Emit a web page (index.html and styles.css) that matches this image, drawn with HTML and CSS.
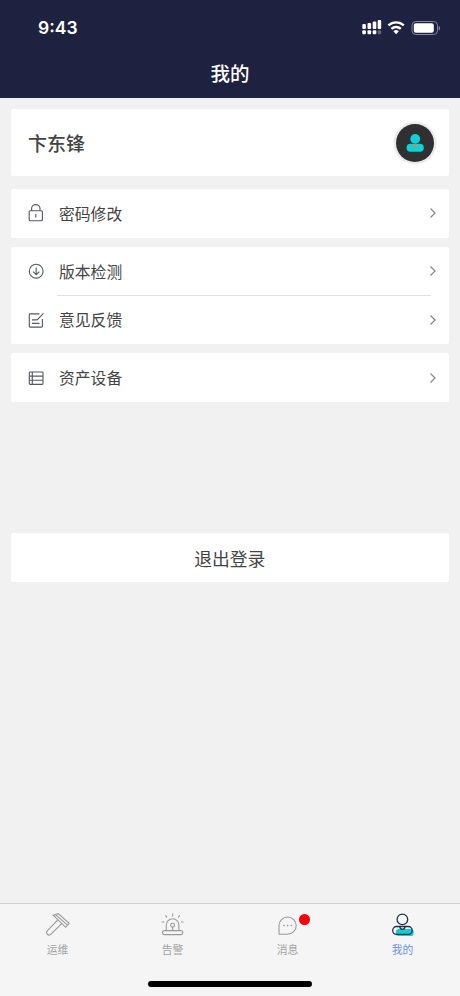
FILE: index.html
```
<!DOCTYPE html>
<html lang="zh-CN">
<head>
  <meta charset="UTF-8">
  <meta name="viewport" content="width=device-width, initial-scale=1.0">
  <title>我的</title>
  <link rel="stylesheet" href="styles.css">
</head>
<body>

  <header class="header">
    <div class="status-bar">
      <span class="time">9:43</span>
      <svg class="status-icons" width="80" height="18" viewBox="0 0 80 18">
        <g fill="#fff">
          <rect x="2.3" y="6" width="3.6" height="5" rx="1"/>
          <rect x="7.5" y="5" width="3.6" height="6" rx="1"/>
          <rect x="12.7" y="3.5" width="3.6" height="7.5" rx="1"/>
          <rect x="17.7" y="2" width="3.5" height="9" rx="1"/>
          <rect x="2.3" y="12.3" width="3.6" height="4" rx="1"/>
          <rect x="7.5" y="12.3" width="3.6" height="4" rx="1"/>
          <rect x="12.7" y="12.3" width="3.6" height="4" rx="1"/>
          <rect x="17.7" y="12.3" width="3.5" height="4" rx="1" opacity=".3"/>
        </g>
        <g fill="none" stroke="#fff" stroke-width="2.4">
          <path d="M28.4 7.4a11.2 11.2 0 0 1 15.4 0"/>
          <path d="M31.4 10.9a6.8 6.8 0 0 1 9.4 0"/>
        </g>
        <path d="M33.4 13.3a4 4 0 0 1 5.4 0l-2.7 2.9z" fill="#fff"/>
        <rect x="52" y="3.5" width="25.5" height="13" rx="3.8" fill="none" stroke="#85869c"/>
        <rect x="53.8" y="5.3" width="20" height="9.4" rx="2" fill="#fff"/>
        <path d="M78.7 8v4.4c2.2-.8 2.2-3.6 0-4.4z" fill="#85869c"/>
      </svg>
    </div>
    <h1 class="title">我的</h1>
  </header>

  <main class="content">
    <section class="card profile">
      <span class="name">卞东锋</span>
      <svg class="avatar" width="44" height="44" viewBox="0 0 44 44">
        <circle cx="22" cy="22" r="21.5" fill="#ececec"/>
        <circle cx="22" cy="22" r="19" fill="#303032"/>
        <circle cx="22.2" cy="17.9" r="4.9" fill="#0bd3da"/>
        <rect x="13.5" y="22.7" width="17.3" height="8" rx="4" fill="#0bd3da"/>
        <path d="M18.6 23.1h6.8l-3.4 4.5z" fill="#a99a62"/>
      </svg>
    </section>

    <section class="card">
      <a class="row">
        <svg class="row-icon" viewBox="0 0 16 18">
          <rect x="1.2" y="6.8" width="13.2" height="10" rx="1"/>
          <path d="M3.6 6.8V4.6a4.2 4 0 0 1 8.4 0v2.2M7.8 10v3.6"/>
        </svg>
        <span class="label">密码修改</span>
        <svg class="arrow" viewBox="0 0 8 12"><path d="M1.5 1.5L6 6 1.5 10.5"/></svg>
      </a>
    </section>

    <section class="card">
      <a class="row">
        <svg class="row-icon" viewBox="0 0 16 18">
          <circle cx="8.2" cy="9.2" r="6.9"/>
          <path d="M8.2 5.5v7M5.1 9.7l3.1 3 3.1-3"/>
        </svg>
        <span class="label">版本检测</span>
        <svg class="arrow" viewBox="0 0 8 12"><path d="M1.5 1.5L6 6 1.5 10.5"/></svg>
      </a>
      <div class="line"></div>
      <a class="row">
        <svg class="row-icon" viewBox="0 0 16 18">
          <path d="M11.4 2.9H2.1a.8.8 0 0 0-.8.8v11.6a.8.8 0 0 0 .8.8h11.5a.8.8 0 0 0 .8-.8V8M15.4 2.3L9 9.1M4 8.9h4.8M4 12.4h7.5"/>
        </svg>
        <span class="label">意见反馈</span>
        <svg class="arrow" viewBox="0 0 8 12"><path d="M1.5 1.5L6 6 1.5 10.5"/></svg>
      </a>
    </section>

    <section class="card">
      <a class="row">
        <svg class="row-icon" viewBox="0 0 16 18">
          <rect x="1.3" y="3" width="13.7" height="12.4" rx=".8"/>
          <path d="M1.3 7.1H15M1.3 11.2H15M4.3 3v12.4"/>
        </svg>
        <span class="label">资产设备</span>
        <svg class="arrow" viewBox="0 0 8 12"><path d="M1.5 1.5L6 6 1.5 10.5"/></svg>
      </a>
    </section>

    <button class="card logout">退出登录</button>
  </main>

  <footer class="footer">
    <nav class="tabs">
      <a class="tab">
        <svg class="tab-icon" viewBox="0 0 26 26">
          <path d="M8.2 3.2l5-1.5 11 9.6-3.5 4zM10.6 2.6l11.9 10.6M13 7.6L2.4 18.7a2.5 2.5 0 0 0 3.6 3.5L17 11.3"/>
        </svg>
        <span>运维</span>
      </a>
      <a class="tab">
        <svg class="tab-icon" viewBox="0 0 26 26">
          <rect x="2.4" y="18.6" width="20.4" height="4" rx="2"/>
          <path d="M6.3 18.5v-5.4a6.3 6.3 0 0 1 12.6 0v5.4M12.6 15v3.5M12.6 1.6v2.8M5.5 3.3l1.5 2M19.7 3.3l-1.5 2M1.6 10h2.8M20.8 10h2.8"/>
          <circle cx="12.6" cy="13.2" r="1.9"/>
        </svg>
        <span>告警</span>
      </a>
      <a class="tab">
        <svg class="tab-icon" viewBox="0 0 26 26">
          <path d="M4 22.2V13.6a8.6 8.6 0 1 1 8.6 8.6z"/>
          <path class="dots" d="M8.9 13.6h.1M12.6 13.6h.1M16.3 13.6h.1"/>
        </svg>
        <i class="dot"></i>
        <span>消息</span>
      </a>
      <a class="tab active">
        <svg class="tab-icon" viewBox="0 0 26 26">
          <rect class="shade" x="6" y="16.9" width="17.6" height="7" rx="2.5"/>
          <circle cx="12.4" cy="7.4" r="5.3"/>
          <rect x="2.7" y="14.5" width="19.5" height="7.9" rx="3.9"/>
          <path d="M9.8 14.6c.4 3.6 4.8 3.6 5.4 0"/>
        </svg>
        <span>我的</span>
      </a>
    </nav>
    <div class="home-bar"></div>
  </footer>

</body>
</html>
```
FILE: styles.css
```
* {
  box-sizing: border-box;
}
body {
  margin: 0;
  height: 996px;
  display: flex;
  flex-direction: column;
  background-color: #f1f1f1;
  color: #444;
  font-family: "Liberation Sans", "Noto Sans CJK SC", sans-serif;
}
.header {
  height: 98px;
  background-color: #1f2140;
  color: #fff;
}
.status-bar {
  height: 54px;
  padding: 0 20px 0 38px;
  display: flex;
  align-items: center;
  justify-content: space-between;
}
.time {
  font-family: Inter, sans-serif;
  font-size: 17.5px;
  font-weight: 600;
}
.title {
  margin: 5px 0 0;
  font-size: 19.5px;
  font-weight: 500;
  line-height: 30px;
  text-align: center;
}
.content {
  flex: 1;
  padding: 11px 11.5px 0 11px;
}
.card {
  margin-bottom: 9px;
  background-color: #fff;
  border-radius: 2px;
}
.profile {
  height: 67px;
  margin-bottom: 13px;
  padding: 0 12px 0 17px;
  display: flex;
  align-items: center;
  justify-content: space-between;
}
.name {
  font-size: 19px;
  font-weight: 500;
}
.row {
  height: 48.75px;
  padding: 0 11.5px 0 17px;
  display: flex;
  align-items: center;
}
.row-icon {
  width: 16px;
  height: 18px;
  fill: none;
  stroke: #555761;
  stroke-width: 1.1;
}
.label {
  flex: 1;
  margin-left: 15px;
  font-size: 15.8px;
}
.arrow {
  width: 8px;
  height: 12px;
  fill: none;
  stroke: #8c8c8c;
  stroke-width: 1.3;
}
.line {
  height: 1px;
  margin: -1px 18px 0 46px;
  background-color: #e0e0e0;
}
.logout {
  display: block;
  width: 100%;
  height: 49px;
  margin-top: 131px;
  padding: 0;
  border: none;
  color: #444;
  font-family: inherit;
  font-size: 17.8px;
}
.footer {
  height: 93px;
  background-color: #f5f5f5;
  border-top: 1px solid #cfcfcf;
}
.tabs {
  height: 77px;
  display: flex;
}
.tab {
  position: relative;
  flex: 1;
  padding-top: 8px;
  display: flex;
  flex-direction: column;
  align-items: center;
  color: #a3a3a3;
  font-size: 10.8px;
  line-height: 16px;
}
.tab span {
  margin-top: 4px;
}
.tab-icon {
  width: 26px;
  height: 26px;
  fill: none;
  stroke: #999;
  stroke-width: 1.1;
}
.dots {
  stroke-width: 1.6;
  stroke-linecap: round;
}
.dot {
  position: absolute;
  top: 10px;
  left: 69px;
  width: 11px;
  height: 11px;
  border-radius: 50%;
  background-color: #fb0007;
}
.active {
  color: #6b93e4;
}
.active .tab-icon {
  stroke: #292c46;
  stroke-width: 1.3;
}
.shade {
  fill: #0dd0d2;
  stroke: none;
}
.home-bar {
  width: 164px;
  height: 6px;
  margin: 0 auto;
  border-radius: 3px;
  background-color: #000;
}
```
